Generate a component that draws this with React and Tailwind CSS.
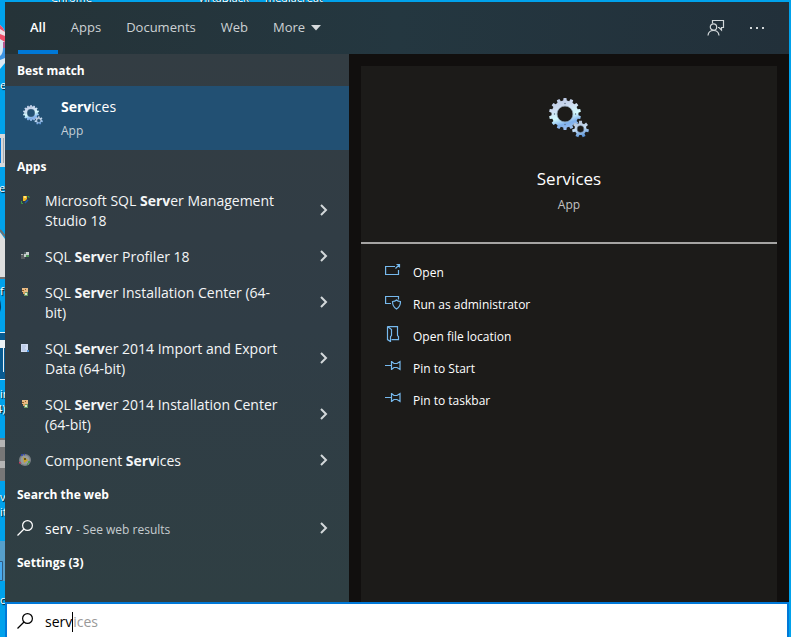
import React from "react";

const tabs = ["All", "Apps", "Documents", "Web"];

const apps = [
  { icon: "studio", parts: ["Microsoft SQL ", "Serv", "er Management Studio 18"] },
  { icon: "profiler", parts: ["SQL ", "Serv", "er Profiler 18"] },
  { icon: "install", parts: ["SQL ", "Serv", "er Installation Center (64-bit)"] },
  { icon: "import", parts: ["SQL ", "Serv", "er 2014 Import and Export Data (64-bit)"] },
  { icon: "install", parts: ["SQL ", "Serv", "er 2014 Installation Center (64-bit)"] },
  { icon: "component", parts: ["Component ", "Serv", "ices"] },
];

const actions = [
  { icon: "open", label: "Open" },
  { icon: "admin", label: "Run as administrator" },
  { icon: "folder", label: "Open file location" },
  { icon: "pin", label: "Pin to Start" },
  { icon: "pin", label: "Pin to taskbar" },
];

function gearPath(cx, cy, outer, root, hole, teeth) {
  const step = (Math.PI * 2) / teeth;
  const at = (r, a) => `${(cx + r * Math.cos(a)).toFixed(2)} ${(cy + r * Math.sin(a)).toFixed(2)}`;
  const points = [];
  for (let i = 0; i < teeth; i++) {
    const a = i * step - Math.PI / 2;
    points.push(at(root, a - step * 0.3), at(outer, a - step * 0.2), at(outer, a + step * 0.2), at(root, a + step * 0.3));
  }
  return `M${points.join("L")}ZM${cx - hole} ${cy}a${hole} ${hole} 0 1 0 ${hole * 2} 0a${hole} ${hole} 0 1 0 ${-hole * 2} 0Z`;
}

function Gears({ id, className }) {
  return (
    <svg viewBox="0 0 40 40" className={className} aria-hidden="true">
      <defs>
        <linearGradient id={id} x1="0.3" y1="0" x2="0.6" y2="1">
          <stop offset="0" stopColor="#b9c6e2" />
          <stop offset="0.3" stopColor="#cddcf0" />
          <stop offset="0.58" stopColor="#d2fbff" />
          <stop offset="0.8" stopColor="#7fb0ec" />
          <stop offset="1" stopColor="#a3c3ee" />
        </linearGradient>
        <linearGradient id={`${id}-small`} x1="0.3" y1="0" x2="0.6" y2="1">
          <stop offset="0" stopColor="#b4bfd2" />
          <stop offset="0.5" stopColor="#c4dcf4" />
          <stop offset="1" stopColor="#4f8bd2" />
        </linearGradient>
      </defs>
      <path d={gearPath(16, 16, 16, 13.5, 7.8, 14)} fill={`url(#${id})`} fillRule="evenodd" />
      <circle cx="16" cy="16" r="8" fill="none" stroke="#8293a3" strokeWidth="0.6" />
      <g fill="#56697c">
        <circle cx="16" cy="5.500" r="0.700" />
        <circle cx="26.500" cy="16" r="0.700" />
        <circle cx="16" cy="26.500" r="0.700" />
        <circle cx="5.500" cy="16" r="0.700" />
      </g>
      <path d={gearPath(31.5, 31, 8.5, 6, 3.2, 7)} fill={`url(#${id}-small)`} fillRule="evenodd" />
      <circle cx="31.500" cy="31" r="3.400" fill="none" stroke="#526172" strokeWidth="0.600" />
    </svg>
  );
}

function AppIcon({ name }) {
  const art = {
    studio: (
      <>
        <path d="M6 4h4v3L8 9H6Z" fill="#f3b923" />
        <path d="M7 4h2v2H7Z" fill="#ffe680" />
        <path d="M4.500 9v2.500H6M10.500 4.500h1.500V6" stroke="#3f9a45" fill="none" />
        <path d="m8 11 3-3" stroke="#1c5cab" strokeWidth="1.500" />
      </>
    ),
    profiler: (
      <>
        <path d="M4 6h4v5H4Z" fill="#595d60" />
        <path d="M7 4h5v5H7Z" fill="#c5cccc" />
        <path d="M7 4h2v2H7Z" fill="#566" />
        <path d="M9 7h3v2H9Z" fill="#4f9658" />
        <path d="M4 6h2v1H4Z" fill="#a9adad" />
      </>
    ),
    install: (
      <>
        <path d="M5 4h6v4H5Z" fill="#e8bb84" />
        <path d="M5 6h2v1H5ZM8 5h1v1H8Z" fill="#925f2a" />
        <path d="M6 8h2v2H6Z" fill="#d99e5c" />
        <path d="M8 8h3v4H7v-2h1Z" fill="#6f9a62" />
        <path d="M8 9h2v2H8Z" fill="#d5ead2" />
      </>
    ),
    import: (
      <>
        <path d="M4 4h7v8H4Z" fill="#d0dcf2" />
        <path d="M5 6h4M5 8h3M5 10h4" stroke="#a5b6da" strokeWidth="0.800" />
        <path d="M10 10h2v2h-2Z" fill="#4f94dc" />
      </>
    ),
    component: (
      <>
        <circle cx="8" cy="8" r="6" fill="#7b8084" />
        <circle cx="8" cy="8" r="4.500" fill="#989c9c" />
        <path d="M6 5 11 8l-4 3Z" fill="#cda420" />
        <path d="M7 6h2v2H7Z" fill="#6b5711" />
        <path d="M4 3h2M7 2.500h1" stroke="#3146ba" strokeWidth="1.500" />
        <path d="M2 10h2v1.500H2Z" fill="#c93d61" />
        <path d="M12 9v2M10 12h1" stroke="#3fa23b" strokeWidth="1.500" />
      </>
    ),
  };
  return (
    <svg viewBox="0 0 16 16" className="size-4 shrink-0" aria-hidden="true">
      {art[name]}
    </svg>
  );
}

function ActionIcon({ name }) {
  const art = {
    open: (
      <>
        <path d="M10 4.500H.6v8h12.900V8" />
        <path d="m10.500 6.500 4-4M11.500 2.500h3v3" />
      </>
    ),
    admin: (
      <>
        <path d="M6 9.500H.6v-7h12.900v3" />
        <path d="M7.500 7.500q2.500 0 4-1.500 1.500 1.500 4 1.500c0 4-1.500 6-4 7.500-2.500-1.500-4-3.500-4-7.500Z" />
      </>
    ),
    folder: (
      <>
        <path d="M2.500.6h10v9l1 1v3h-7" />
        <path d="M2.500.6v13l3 2v-5l1-1v-6l-4-3" />
      </>
    ),
    pin: (
      <path d="M0 7.500h6.500M6.500 3v9M6.500 3.500l2.500 2h3l3-2v8l-3-2H9l-2.500 2" />
    ),
  };
  return (
    <svg viewBox="0 0 16 16" className="size-4 shrink-0" fill="none" stroke="#76b9ed" strokeWidth="1.200" aria-hidden="true">
      {art[name]}
    </svg>
  );
}

function SearchIcon() {
  return (
    <svg viewBox="0 0 16 16" className="size-4 shrink-0" fill="none" stroke="currentColor" strokeWidth="1.200" aria-hidden="true">
      <circle cx="10.500" cy="5.500" r="4.900" />
      <path d="M7 9 .5 15.500" />
    </svg>
  );
}

function Chevron() {
  return (
    <svg viewBox="0 0 8 12" className="h-3 w-2 shrink-0" fill="none" stroke="#d3d8da" strokeWidth="2" aria-hidden="true">
      <path d="m1 1 5 5-5 5" />
    </svg>
  );
}

function SectionTitle({ children }) {
  return <h2 className="flex h-8 items-center pt-0.5 pl-3 text-[12px] font-bold text-white">{children}</h2>;
}

function Desktop() {
  const label = "absolute text-[11px] leading-3 whitespace-nowrap text-white [text-shadow:1px_1px_1px_black]";
  return (
    <div className="absolute inset-0 overflow-hidden" aria-hidden="true">
      <svg className="absolute top-0 left-0" width="5" height="637">
        <path d="M0 25q3 2 5 7v31l-5 6Z" fill="#dce8f2" />
        <path d="M0 25q3 2 5 7v10l-5-3Z" fill="#ef4d68" />
        <path d="M0 29l5 3v4l-5-2Z" fill="#eedde5" />
        <path d="M3 42h2v8H3Z" fill="#b65a95" />
        <path d="M5 48v10l-5 2v-4q3-2 3-8Z" fill="#3d94e4" />
        <path d="M0 134h5v33H0Z" fill="#d6d9dc" />
        <path d="M0 138h1v25H0Z" fill="#087ad8" />
        <path d="M3 138h1v25H3Z" fill="#a5a8ab" />
        <path d="M0 232l5 7v39H0Z" fill="#dedede" />
        <path d="m0 230 5 6M0 278h5" stroke="#707070" strokeWidth="2" />
        <path d="M0 300q2 7 0 12Z" fill="#063c61" />
        <path d="M0 333h5v46H0Z" fill="#095b91" />
        <path d="M0 332.500h5M0 379.500h5" stroke="#e8f3fa" />
        <path d="M0 340h5v8H0ZM3 348h1v24H3Z" fill="#ecf2f6" />
        <path d="M0 438h5v43H0Z" fill="#777" />
        <path d="M0 440h5v7H0ZM0 461h5v7H0Z" fill="#b5b5b5" />
        <path d="M0 541h5v40H0Z" fill="#579fca" />
        <path d="M0 561.500h2.500v19H0" fill="#46aaf0" stroke="#315b80" />
      </svg>
      <span className={`${label} top-[79px] left-0`}>e</span>
      <span className={`${label} top-[182px] -left-px`}>e</span>
      <span className={`${label} top-[285px] left-0`}>f</span>
      <span className={`${label} top-[388px] left-0`}>ir</span>
      <span className={`${label} top-[403px] -left-1`}>4)</span>
      <span className={`${label} top-[491px] left-0`}>v</span>
      <span className={`${label} top-[506px] left-0`}>it</span>
      <span className={`${label} top-[594px] left-0`}>c</span>
      <span className={`${label} -top-2 left-[51px]`}>Chrome</span>
      <span className={`${label} -top-2 left-[198px]`}>VirtaBlack</span>
      <span className={`${label} -top-2 left-[265px]`}>mediacreat</span>
    </div>
  );
}

export default function App() {
  return (
    <div className="relative flex min-h-screen flex-col bg-[#00a2ec] pt-0.5 pr-0.5 pl-[5px] font-['Open_Sans','Noto_Sans',sans-serif]">
      <Desktop />
      <main className="relative flex flex-1 flex-col bg-[#2f3c43]">
        <header className="flex h-[52px] items-stretch justify-between bg-linear-to-r from-[#253338] via-[#243740] to-[#22303a] pr-6 pl-[13px]">
          <nav className="flex gap-px text-[13px]">
            {tabs.map((tab, i) => (
              <button
                key={tab}
                type="button"
                className={
                  i === 0
                    ? "border-b-4 border-[#0078d7] px-3 pt-1 font-semibold text-white"
                    : "border-b-4 border-transparent px-3 pt-1 text-[#cdd2d4]"
                }
              >
                {tab}
              </button>
            ))}
            <button type="button" className="flex items-center gap-1.5 px-3 text-[#cdd2d4]">
              More
              <svg viewBox="0 0 10 6" className="h-1.5 w-2.5" aria-hidden="true">
                <path d="M0 0h10L5 5.500Z" fill="#d6dadc" />
              </svg>
            </button>
          </nav>
          <div className="flex items-center gap-6">
            <button type="button" aria-label="Feedback">
              <svg viewBox="0 0 18 18" className="size-[18px]" fill="none" stroke="#d3d8da" strokeWidth="1.200" aria-hidden="true">
                <path d="M5.500 4.500v-3h11v7h-2V11L12 8.500h-1" />
                <circle cx="6.500" cy="8" r="3.200" />
                <path d="M1 16.500q.5-5 5.500-5t5.500 5" />
              </svg>
            </button>
            <button type="button" aria-label="Options">
              <svg viewBox="0 0 16 4" className="h-1 w-4" fill="#d3d8da" aria-hidden="true">
                <path d="M1 1h2v2H1zM7 1h2v2H7zM13 1h2v2h-2z" />
              </svg>
            </button>
          </div>
        </header>

        <div className="flex flex-1">
          <section className="w-[344px] shrink-0 bg-linear-to-b from-[#333d43] via-[#303d46] to-[#2f3f43]">
            <SectionTitle>Best match</SectionTitle>
            <button type="button" className="flex h-16 w-full items-start gap-4 bg-[#225073] pt-[11px] pl-[18px] text-left">
              <Gears id="gear-row" className="mt-2 size-5 shrink-0" />
              <span className="ml-0.5 flex flex-col gap-1">
                <span className="text-[14px] leading-5 text-white"><b className="font-bold">Serv</b>ices</span>
                <span className="text-[12px] leading-5 text-[#c6d0d8]">App</span>
              </span>
            </button>

            <SectionTitle>Apps</SectionTitle>
            <ul>
              {apps.map(({ icon, parts }) => (
                <li key={parts.join("")}>
                  <button type="button" className="flex w-full items-center pr-[21px] pl-3 text-left">
                    <span className="self-start pt-2.5"><AppIcon name={icon} /></span>
                    <span className="ml-3 w-60 pt-[9px] pb-[7px] text-[14px] leading-5 text-[#f4f6f7]">
                      {parts[0]}<b className="font-bold">{parts[1]}</b>{parts[2]}
                    </span>
                    <span className="ml-auto"><Chevron /></span>
                  </button>
                </li>
              ))}
            </ul>

            <SectionTitle>Search the web</SectionTitle>
            <button type="button" className="flex h-9 w-full items-center pr-[21px] pl-3 text-left text-white">
              <SearchIcon />
              <span className="ml-3 pt-0.5 text-[14px] leading-5">
                serv <span className="text-[12px] text-[#c7cdd0]">- See web results</span>
              </span>
              <span className="ml-auto"><Chevron /></span>
            </button>
            <SectionTitle>Settings (3)</SectionTitle>
          </section>

          <section className="flex flex-1 bg-[#110f0e] px-3 pt-3">
            <div className="flex-1 bg-[#1c1b19]">
              <div className="flex h-[178px] flex-col items-center border-b-2 border-[#a5a4a3] pt-8">
                <Gears id="gear-card" className="size-10" />
                <h1 className="mt-[29px] text-[17px] leading-6 text-white">Services</h1>
                <p className="mt-1 text-[12px] leading-5 text-[#c4c3c2]">App</p>
              </div>
              <ul className="pt-3">
                {actions.map(({ icon, label }) => (
                  <li key={label}>
                    <button type="button" className="flex h-8 w-full items-center gap-3 pl-6 text-left text-[12px] text-white">
                      <span className="pb-1"><ActionIcon name={icon} /></span>
                      <span className="pt-0.5">{label}</span>
                    </button>
                  </li>
                ))}
              </ul>
            </div>
          </section>
        </div>

        <label className="flex h-[35px] items-center gap-3 border-x-2 border-t-2 border-[#0078d7] bg-white pl-2.5 text-[14px] text-black">
          <SearchIcon />
          <span className="relative flex flex-1 items-center pt-0.5">
            <input type="text" defaultValue="serv" aria-label="Search" className="w-full bg-transparent leading-5 outline-none" />
            <span className="pointer-events-none absolute inset-y-0 left-0 flex items-center pt-0.5 leading-5 text-[#999]" aria-hidden="true">
              <span className="invisible">serv</span>
              <span className="h-5 w-px bg-black" />
              ices
            </span>
          </span>
        </label>
      </main>
    </div>
  );
}
